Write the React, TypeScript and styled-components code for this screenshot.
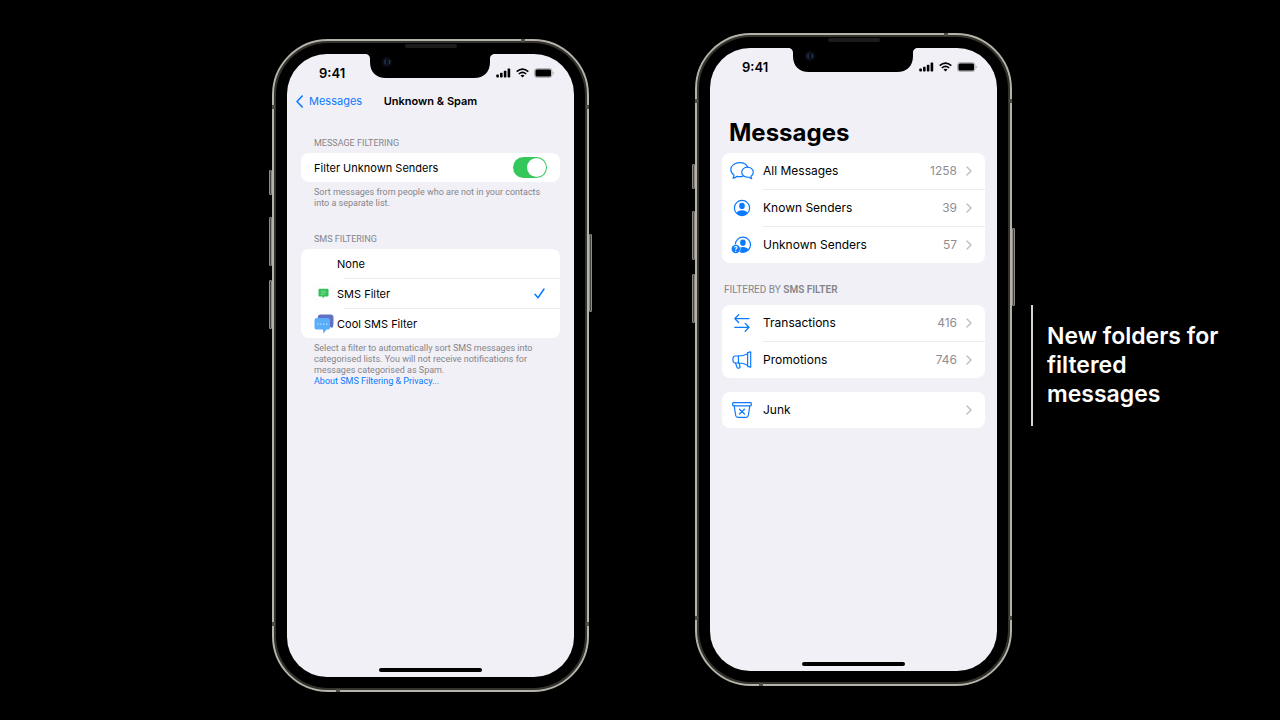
import React, { useState } from "react";
import styled, { createGlobalStyle } from "styled-components";

const GlobalStyle = createGlobalStyle`
  *, *::before, *::after { box-sizing: border-box; }
  body {
    margin: 0;
    background: #000;
    color: #000;
    font-family: Inter, "Liberation Sans", sans-serif;
    font-size: 11px;
  }
  a { color: inherit; text-decoration: none; }
  h1, h2, p, ul { margin: 0; padding: 0; font-weight: inherit; }
  svg { display: block; flex: none; }
`;

const BLUE = "#0a7aff";
const SMALL_TEXT = `Roboto, "Liberation Sans", sans-serif`;

const Stage = styled.main`
  display: grid;
  grid-template-columns: minmax(0, 272fr) 317px minmax(0, 106fr) 317px minmax(220px, 268fr);
  align-items: start;
  min-height: 100vh;
  overflow: hidden;
`;

/* Device frame */

const Device = styled.section<{ $column: number; $top: number }>`
  grid-column: ${(p) => p.$column};
  grid-row: 1;
  position: relative;
  margin-top: ${(p) => p.$top}px;
  padding: 13px;
  border: 2px solid #b4b2a9;
  border-radius: 56px;
  background: #000;
  box-shadow: inset 0 0 0 2px #34322d;
`;

const SideButton = styled.span<{ $side: "left" | "right"; $y: number; $length: number }>`
  position: absolute;
  ${(p) => p.$side}: -5px;
  top: ${(p) => p.$y}px;
  width: 3px;
  height: ${(p) => p.$length}px;
  border: 1px solid #8f8d85;
  border-radius: 1px;
  background: #45433d;
`;

const SideBand = styled.span<{ $side: "left" | "right"; $edge: "top" | "bottom" }>`
  position: absolute;
  ${(p) => p.$side}: -2px;
  ${(p) => p.$edge}: 64px;
  width: 3px;
  height: 4px;
  background: #504e48;
`;

const EndBand = styled.span<{ $edge: "top" | "bottom" }>`
  position: absolute;
  ${(p) => p.$edge}: -2px;
  ${(p) => (p.$edge === "top" ? "right" : "left")}: 62px;
  width: 4px;
  height: 3px;
  background: #504e48;
`;

const Earpiece = styled.span`
  position: absolute;
  top: 3px;
  left: 50%;
  width: 52px;
  height: 4px;
  margin-left: -26px;
  border-radius: 2px;
  background: #1b1b1b;
`;

const Screen = styled.div`
  position: relative;
  display: flex;
  flex-direction: column;
  min-height: 623px;
  border-radius: 40px;
  background: #f1f0f6;
`;

const NotchArt = styled.svg`
  position: absolute;
  top: -1px;
  left: 50%;
  margin-left: -66px;
`;

const StatusBar = styled.div`
  display: flex;
  align-items: center;
  justify-content: space-between;
  height: 38px;
  padding: 0 20px 0 32px;
`;

const Clock = styled.time`
  font-size: 13px;
  line-height: 16px;
  font-weight: 600;
`;

const StatusIcons = styled.div`
  display: flex;
  align-items: center;
  gap: 5px;
`;

const HomeBar = styled.div`
  width: 103px;
  height: 4px;
  margin: auto auto 5px;
  border-radius: 2px;
  background: #000;
`;

/* Settings screen */

const NavBar = styled.header`
  display: grid;
  grid-template-columns: 1fr auto 1fr;
  align-items: center;
  height: 18px;
  padding: 0 9px;
`;

const BackLink = styled.a`
  display: flex;
  align-items: center;
  gap: 6px;
  color: ${BLUE};
  font-size: 11px;
  line-height: 14px;
`;

const NavTitle = styled.h1`
  font-size: 11px;
  line-height: 14px;
  font-weight: 600;
`;

const SettingsBody = styled.div`
  display: flex;
  flex-direction: column;
  padding: 27px 14px 0;
`;

const GroupLabel = styled.h2`
  padding: 0 13px;
  color: #85858b;
  font-family: ${SMALL_TEXT};
  font-size: 9px;
  line-height: 12px;
`;

const Card = styled.ul`
  list-style: none;
  border-radius: 8px;
  background: #fff;
`;

const SettingsCard = styled(Card)`
  margin-top: 4px;
`;

const Divider = styled.li<{ $indent: number }>`
  height: 1px;
  margin-left: ${(p) => p.$indent}px;
  background: #ebebee;
`;

const SettingRow = styled.label`
  display: flex;
  align-items: center;
  height: 29px;
  padding: 0 13px;
  font-size: 11px;
  line-height: 14px;
`;

const OptionIcon = styled.span`
  display: flex;
  justify-content: center;
  width: 19px;
  margin-right: 4px;
`;

const RowText = styled.span`
  flex: 1;
`;

const Switch = styled.input`
  appearance: none;
  width: 34px;
  height: 21px;
  margin: 0;
  padding: 1px;
  border-radius: 11px;
  background: #d9d9de;
  &::before {
    content: "";
    display: block;
    width: 19px;
    height: 19px;
    border-radius: 50%;
    background: #fff;
  }
  &:checked { background: #34c759; }
  &:checked::before { margin-left: auto; }
`;

const HiddenRadio = styled.input`
  appearance: none;
  width: 0;
  height: 0;
  margin: 0;
`;

const Footnote = styled.p`
  padding: 5px 13px 0;
  color: #85858b;
  font-family: ${SMALL_TEXT};
  font-size: 9px;
  line-height: 11px;
  white-space: pre;
  a { color: ${BLUE}; }
`;

const Spacer = styled.div`
  height: 24px;
`;

/* Folder list screen */

const FoldersBody = styled.div`
  display: flex;
  flex-direction: column;
  padding: 32px 12px 0;
`;

const LargeTitle = styled.h1`
  padding: 0 7px;
  margin-bottom: 5px;
  font-size: 24px;
  line-height: 30px;
  font-weight: 700;
`;

const FolderLabel = styled(GroupLabel)`
  margin: 21px 0 9px;
  padding: 0 2px;
  font-size: 10px;
  b { font-weight: 600; }
`;

const JunkCard = styled(Card)`
  margin-top: 14px;
`;

const FolderLink = styled.a`
  display: flex;
  align-items: center;
  height: 36px;
  padding: 0 13px 0 8px;
  font-size: 12px;
  line-height: 16px;
`;

const FolderIcon = styled.span`
  display: flex;
  justify-content: center;
  width: 24px;
  margin-right: 9px;
  color: ${BLUE};
`;

const Count = styled.span`
  margin-right: 9px;
  color: #8e8e93;
`;

const Callout = styled.aside`
  grid-column: 5;
  grid-row: 1;
  display: flex;
  align-items: center;
  min-height: 121px;
  margin: 305px 40px 0 19px;
  padding-left: 14px;
  border-left: 2px solid #d4d4d4;
  color: #fff;
  font-size: 23px;
  line-height: 29px;
  font-weight: 600;
`;

const CalloutText = styled.p`
  max-width: 180px;
`;

const Notch = () => (
  <NotchArt width="130" height="26" viewBox="0 0 130 26" aria-hidden="true">
    <path d="M0 0H130V1C127 1 125 2.500 125 6V9C125 19 119 25 109 25H21C11 25 5 19 5 9V6C5 2.500 3 1 0 1Z" fill="#000" />
    <circle cx="22" cy="9" r="5" fill="#0a0d14" />
    <path d="M20.500 6.500Q19 9 20.500 11.500M24 7Q25.200 9 24 11" fill="none" stroke="#1f3a63" strokeWidth="1.300" />
  </NotchArt>
);

const Signal = () => (
  <svg width="15" height="10" viewBox="0 0 15 10" aria-hidden="true">
    <rect x="0.300" y="6.500" width="2.600" height="3" rx="0.700" />
    <rect x="4" y="4.800" width="2.600" height="4.700" rx="0.700" />
    <rect x="7.800" y="2.700" width="2.600" height="6.800" rx="0.700" />
    <rect x="11.600" y="0.400" width="2.600" height="9.100" rx="0.700" />
  </svg>
);

const Wifi = () => (
  <svg width="13" height="10" viewBox="0 0 13 10" fill="none" stroke="#000" aria-hidden="true">
    <path d="M0.700 3.700Q6.500 -1.500 12.300 3.700" strokeWidth="1.700" />
    <path d="M2.800 6Q6.500 2.700 10.200 6" strokeWidth="1.600" />
    <path d="M4.500 7.500Q6.500 5.900 8.500 7.500L6.500 9.500Z" fill="#000" stroke="none" />
  </svg>
);

const Battery = () => (
  <svg width="20" height="10" viewBox="0 0 20 10" aria-hidden="true">
    <rect x="0.500" y="0.500" width="17.500" height="9" rx="2.600" fill="#c4c4c8" stroke="#b4b4b8" />
    <rect x="1.500" y="1.500" width="15.500" height="7" rx="1.500" />
    <path d="M18.800 3.500Q20 4 20 5T18.800 6.500Z" fill="#b4b4b8" />
  </svg>
);

const BackChevron = () => (
  <svg width="7" height="13" viewBox="0 0 7 13" fill="none" aria-hidden="true">
    <path d="M6.200 1L1 6.500L6.200 12" stroke="currentColor" strokeWidth="1.600" strokeLinecap="round" strokeLinejoin="round" />
  </svg>
);

const RowChevron = () => (
  <svg width="6" height="10" viewBox="0 0 6 10" fill="none" aria-hidden="true">
    <path d="M1 1L5 5L1 9" stroke="#bcbcc1" strokeWidth="1.400" strokeLinecap="round" strokeLinejoin="round" />
  </svg>
);

const Check = () => (
  <svg width="13" height="11" viewBox="0 0 13 11" fill="none" aria-hidden="true">
    <path d="M1 6.300L4 9.700L10 1" stroke={BLUE} strokeWidth="1.500" strokeLinecap="round" strokeLinejoin="round" />
  </svg>
);

const GreenBubble = () => (
  <svg width="19" height="19" viewBox="0 0 19 19" aria-hidden="true">
    <rect x="0.500" y="0.500" width="18" height="18" rx="4" fill="#fff" stroke="#fafafa" />
    <path d="M5.500 4.800H13.500Q14.500 4.800 14.500 5.800V11.500Q14.500 12.500 13.500 12.500H10.500L8.600 14.500V12.500H5.500Q4.500 12.500 4.500 11.500V5.800Q4.500 4.800 5.500 4.800Z" fill="#34bf57" />
    <path d="M6.800 7.200H12.200M6.800 8.800H12.200M6.800 10.300H10.500" stroke="#8fe0a4" strokeWidth="0.700" />
  </svg>
);

const BlueBubbles = () => (
  <svg width="20" height="20" viewBox="0 0 20 20" aria-hidden="true">
    <path d="M6.500 0.500H16.500Q19.500 0.500 19.500 3.500V9.500Q19.500 12 18.300 14L15 12.500H6.500Q3.800 12.500 3.800 9.500V3.500Q3.800 0.500 6.500 0.500Z" fill="#6272c3" />
    <path d="M3 4H13.500Q16 4 16 6.500V13Q16 15.600 13.500 15.600H12.500L9.500 19.500L8.800 15.600H3Q0.500 15.600 0.500 13V6.500Q0.500 4 3 4Z" fill="#58aefb" />
    <path d="M3.200 10.200H13.500" stroke="#b4dcff" strokeWidth="1.200" strokeDasharray="1.500 1.400" />
  </svg>
);

const Bubbles = () => (
  <svg width="24" height="18" viewBox="0 0 24 18" fill="none" stroke="currentColor" strokeWidth="1.200" strokeLinejoin="round" strokeLinecap="round" aria-hidden="true">
    <path d="M17.600 5.100C16.500 2.400 13.500 0.700 9.700 0.700C4.700 0.700 0.800 3.600 0.800 7.500C0.800 9.800 2 11.700 4 13C4 14.300 3.600 15.300 3 16.200C4.600 16 5.900 15.300 7 14.300C8.700 14.700 10.800 14.700 12.600 14.300" />
    <path d="M17.500 5.200C20.700 5.200 23.300 7.400 23.300 10.200C23.300 12 22.400 13.400 21 14.300C21 15.200 21.300 16 21.700 16.700C20.500 16.500 19.500 16 18.700 15.200C14.700 15.600 11.700 13.300 11.700 10.200C11.700 7.400 14.300 5.200 17.500 5.200Z" />
  </svg>
);

const Person = () => (
  <svg width="18" height="18" viewBox="0 0 18 18" aria-hidden="true">
    <circle cx="9" cy="9" r="7.600" fill="none" stroke="currentColor" strokeWidth="1.200" />
    <ellipse cx="9" cy="6.900" rx="2.800" ry="3.100" fill="currentColor" />
    <path d="M3.500 14C4.300 12.200 6.500 11.300 9 11.300S13.700 12.200 14.500 14Q12.200 16.600 9 16.600T3.500 14Z" fill="currentColor" />
  </svg>
);

const UnknownPerson = () => (
  <svg width="22" height="18" viewBox="0 0 22 18" aria-hidden="true">
    <circle cx="11.900" cy="8.800" r="7.600" fill="none" stroke="currentColor" strokeWidth="1.200" />
    <ellipse cx="11.900" cy="6.700" rx="2.800" ry="3.100" fill="currentColor" />
    <path d="M6.400 13.800C7.200 12 9.400 11.100 11.900 11.100S16.600 12 17.400 13.800Q15.100 16.400 11.900 16.400T6.400 13.800Z" fill="currentColor" />
    <circle cx="4.800" cy="13" r="4.700" fill="#fff" />
    <circle cx="4.800" cy="13" r="4.200" fill="currentColor" />
    <text x="4.800" y="15.500" textAnchor="middle" fontSize="7" fontWeight="700" fill="#fff">?</text>
  </svg>
);

const Arrows = () => (
  <svg width="16" height="18" viewBox="0 0 16 18" fill="none" stroke="currentColor" strokeWidth="1.300" strokeLinecap="round" strokeLinejoin="round" aria-hidden="true">
    <path d="M15 4.600H0.800M4.600 0.700L0.800 4.600L4.600 8.500" />
    <path d="M0.800 13.300H15M11.200 9.400L15 13.300L11.200 17.200" />
  </svg>
);

const Megaphone = () => (
  <svg width="20" height="18" viewBox="0 0 20 18" fill="none" stroke="currentColor" strokeWidth="1.200" strokeLinecap="round" strokeLinejoin="round" aria-hidden="true">
    <path d="M15.600 2.700C12.500 4.400 9.500 5 6.500 5H3.500C1.700 5 0.900 6.300 0.900 8.500S1.700 12 3.500 12H6.500C9.500 12 12.500 12.600 15.600 14.300" />
    <path d="M15.600 1.700L18.700 0.800V16.200L15.600 15.300Z" />
    <path d="M6.400 5V12" />
    <path d="M3.600 12.200L5 16.300Q5.300 17.300 6.200 17.200L7.500 16.900Q8.300 16.600 8 15.800L7.200 12.200" />
  </svg>
);

const JunkBin = () => (
  <svg width="20" height="16" viewBox="0 0 20 16" fill="none" stroke="currentColor" strokeWidth="1.200" strokeLinecap="round" strokeLinejoin="round" aria-hidden="true">
    <rect x="0.700" y="0.700" width="18.600" height="3.200" rx="0.800" />
    <path d="M2.200 4L3.700 13.500Q4 15.300 5.800 15.300H14.200Q16 15.300 16.300 13.500L17.800 4" />
    <path d="M7.500 7.200L12.500 12M12.500 7.200L7.500 12" />
  </svg>
);

interface PhoneProps {
  column: number;
  top: number;
  label: string;
  children: React.ReactNode;
}

const Phone = ({ column, top, label, children }: PhoneProps) => (
  <Device $column={column} $top={top} aria-label={label}>
    <SideButton $side="left" $y={129} $length={25} />
    <SideButton $side="left" $y={176} $length={49} />
    <SideButton $side="left" $y={239} $length={49} />
    <SideButton $side="right" $y={193} $length={78} />
    <SideBand $side="left" $edge="top" />
    <SideBand $side="right" $edge="top" />
    <SideBand $side="left" $edge="bottom" />
    <SideBand $side="right" $edge="bottom" />
    <EndBand $edge="top" />
    <EndBand $edge="bottom" />
    <Earpiece />
    <Screen>
      <Notch />
      <StatusBar>
        <Clock>9:41</Clock>
        <StatusIcons>
          <Signal />
          <Wifi />
          <Battery />
        </StatusIcons>
      </StatusBar>
      {children}
      <HomeBar />
    </Screen>
  </Device>
);

const filters = [
  { name: "None", icon: null },
  { name: "SMS Filter", icon: <GreenBubble /> },
  { name: "Cool SMS Filter", icon: <BlueBubbles /> },
];

interface Folder {
  name: string;
  icon: React.ReactNode;
  count?: number;
}

const senderFolders: Folder[] = [
  { name: "All Messages", icon: <Bubbles />, count: 1258 },
  { name: "Known Senders", icon: <Person />, count: 39 },
  { name: "Unknown Senders", icon: <UnknownPerson />, count: 57 },
];

const filteredFolders: Folder[] = [
  { name: "Transactions", icon: <Arrows />, count: 416 },
  { name: "Promotions", icon: <Megaphone />, count: 746 },
];

const FolderRows = ({ folders }: { folders: Folder[] }) => (
  <>
    {folders.map((folder, i) => (
      <React.Fragment key={folder.name}>
        {i > 0 && <Divider $indent={41} role="presentation" />}
        <li>
          <FolderLink href="#">
            <FolderIcon>{folder.icon}</FolderIcon>
            <RowText>{folder.name}</RowText>
            {folder.count !== undefined && <Count>{folder.count}</Count>}
            <RowChevron />
          </FolderLink>
        </li>
      </React.Fragment>
    ))}
  </>
);

export default function App() {
  const [filterUnknown, setFilterUnknown] = useState(true);
  const [selected, setSelected] = useState("SMS Filter");

  return (
    <>
      <GlobalStyle />
      <Stage>
        <Phone column={2} top={39} label="Unknown and spam settings">
          <NavBar>
            <BackLink href="#">
              <BackChevron />
              Messages
            </BackLink>
            <NavTitle>Unknown &amp; Spam</NavTitle>
          </NavBar>
          <SettingsBody>
            <GroupLabel>MESSAGE FILTERING</GroupLabel>
            <SettingsCard>
              <li>
                <SettingRow>
                  <RowText>Filter Unknown Senders</RowText>
                  <Switch
                    type="checkbox"
                    role="switch"
                    checked={filterUnknown}
                    onChange={(e) => setFilterUnknown(e.target.checked)}
                  />
                </SettingRow>
              </li>
            </SettingsCard>
            <Footnote>{"Sort messages from people who are not in your contacts\ninto a separate list."}</Footnote>
            <Spacer />
            <GroupLabel>SMS FILTERING</GroupLabel>
            <SettingsCard>
              {filters.map((filter, i) => (
                <React.Fragment key={filter.name}>
                  {i > 0 && <Divider $indent={43} role="presentation" />}
                  <li>
                    <SettingRow>
                      <HiddenRadio
                        type="radio"
                        name="sms-filter"
                        checked={selected === filter.name}
                        onChange={() => setSelected(filter.name)}
                      />
                      <OptionIcon>{filter.icon}</OptionIcon>
                      <RowText>{filter.name}</RowText>
                      {selected === filter.name && <Check />}
                    </SettingRow>
                  </li>
                </React.Fragment>
              ))}
            </SettingsCard>
            <Footnote>
              {"Select a filter to automatically sort SMS messages into\ncategorised lists. You will not receive notifications for\nmessages categorised as Spam.\n"}
              <a href="#">About SMS Filtering &amp; Privacy...</a>
            </Footnote>
          </SettingsBody>
        </Phone>

        <Phone column={4} top={33} label="Message folders">
          <FoldersBody>
            <LargeTitle>Messages</LargeTitle>
            <Card>
              <FolderRows folders={senderFolders} />
            </Card>
            <FolderLabel>
              FILTERED BY <b>SMS FILTER</b>
            </FolderLabel>
            <Card>
              <FolderRows folders={filteredFolders} />
            </Card>
            <JunkCard>
              <FolderRows folders={[{ name: "Junk", icon: <JunkBin /> }]} />
            </JunkCard>
          </FoldersBody>
        </Phone>

        <Callout>
          <CalloutText>New folders for filtered messages</CalloutText>
        </Callout>
      </Stage>
    </>
  );
}
